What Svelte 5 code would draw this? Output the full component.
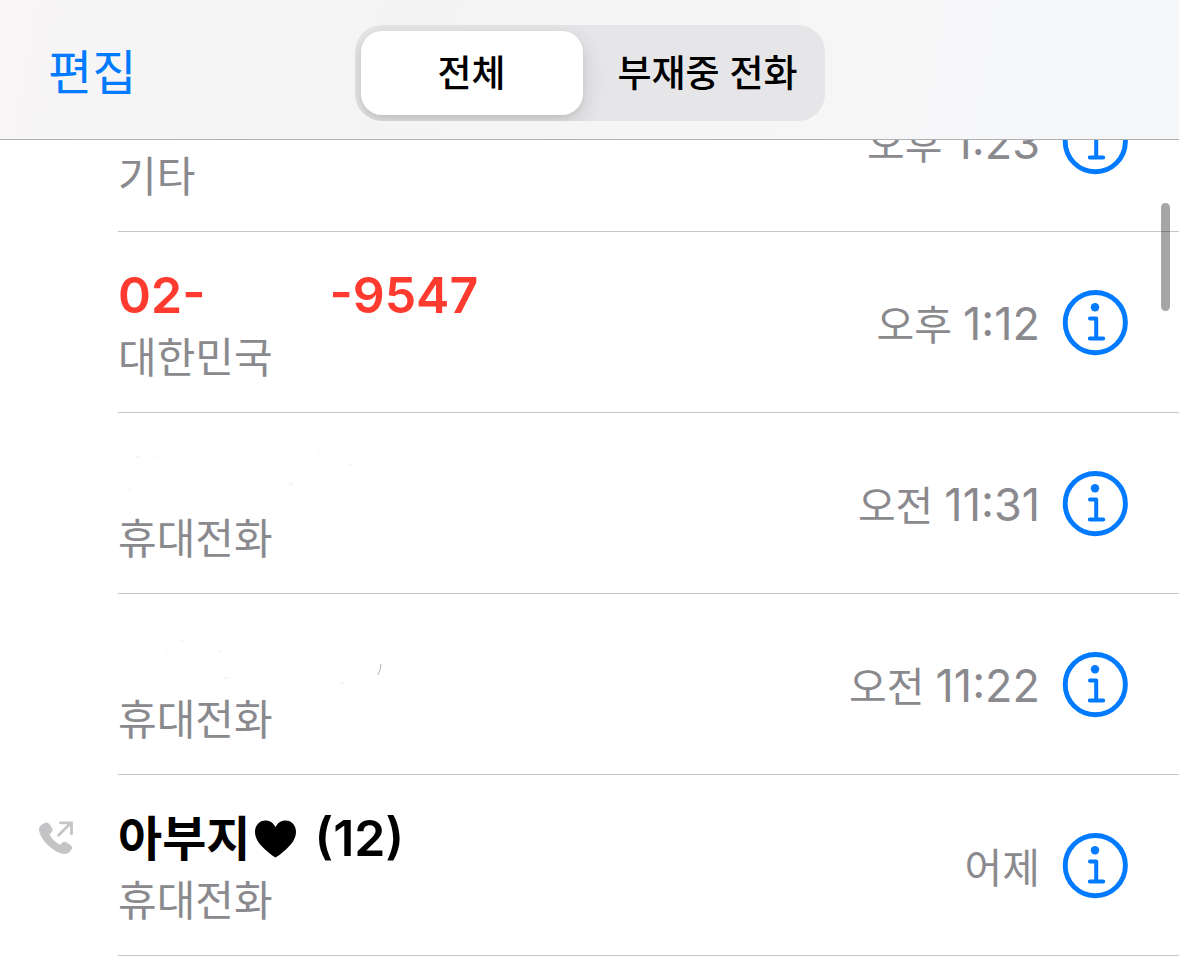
<script>
  const calls = [
    { kind: 'other', label: '기타', day: '오후', clock: '1:23' },
    { kind: 'masked', label: '대한민국', day: '오후', clock: '1:12' },
    { kind: 'blank', label: '휴대전화', day: '오전', clock: '11:31', marks: 'M18 8h5M36 8l2-1M199 4h2M231 16h3M9 43l4-3M171 36l4-2M156 47h3' },
    { kind: 'blank', label: '휴대전화', day: '오전', clock: '11:22', marks: 'M62 11h3M47 21h2M100 21h3M106 48h4M222 53h4', nick: 'M263 34q0 5-3 11' },
    { kind: 'contact', label: '휴대전화', day: '어제', clock: '', outgoing: true },
  ];
  let filter = $state('all');
</script>

<div class="screen">
  <header>
    <button class="edit" type="button">편집</button>
    <div class="segments" role="group" aria-label="통화 목록">
      <button type="button" class:active={filter === 'all'} aria-pressed={filter === 'all'} onclick={() => (filter = 'all')}>전체</button>
      <button type="button" class:active={filter === 'missed'} aria-pressed={filter === 'missed'} onclick={() => (filter = 'missed')}>부재중 전화</button>
    </div>
  </header>

  <main>
    <ul>
      {#each calls as call}
        <li>
          <div class="status">
            {#if call.outgoing}
              <svg width="36" height="36" viewBox="0 0 36 36" aria-hidden="true">
                <path d="M5.2 2.2C7.2.8 9 1.4 10.3 3.1l2.6 3.7c1.2 1.8.9 3.1-.6 4.7l-1 1.1c-.6.7-.5 1.3 0 2.2 1.8 3 4.8 6.2 8.4 8.4.8.5 1.5.6 2.2-.1l1.2-1.1c1.5-1.4 2.9-1.6 4.6-.5l3.7 2.5c1.8 1.2 2.3 3 1 4.8-1.4 2.2-3.4 4.1-6.6 4.1-5.7 0-12.3-4-17.2-9.1C3.6 18.7 0 12.4 0 8.2 0 5.7 1.8 3.9 5.2 2.2z" fill="#c4c4c6" />
                <path d="M19.5 14.2L31.7 2.2M21.5 1.8h11v11" fill="none" stroke="#c4c4c6" stroke-width="2.8" stroke-linecap="round" stroke-linejoin="miter" />
              </svg>
            {/if}
          </div>
          <div class="body">
            <div class="who">
              <div class="name" class:missed={call.kind === 'masked'}>
                {#if call.kind === 'masked'}
                  <span>02-</span><span class="mask"></span><span>-9547</span>
                {:else if call.kind === 'contact'}
                  <span class="person">아부지</span>
                  <svg class="heart" width="41" height="38" viewBox="0 0 42 38" role="img" aria-label="하트">
                    <path d="M21 38C19 37 14 33.500 9 28.500 3.500 23 0 18 0 11.500 0 5 4.500 0 10.500 0 15.500 0 19 2.500 21 7 23 2.500 26.500 0 31.500 0 37.500 0 42 5 42 11.500 42 18 38.500 23 33 28.500 28 33.500 23 37 21 38z" />
                  </svg>
                  <span>(12)</span>
                {:else if call.marks}
                  <svg width="300" height="56" viewBox="0 0 300 56" fill="none" aria-hidden="true">
                    <path d={call.marks} stroke="#ededee" />
                    {#if call.nick}<path d={call.nick} stroke="#b5b5b5" />{/if}
                  </svg>
                {/if}
              </div>
              <div class="label">{call.label}</div>
            </div>
            <time><span class="day">{call.day}</span>{#if call.clock}<span>{call.clock}</span>{/if}</time>
            <button class="info" type="button" aria-label="정보">
              <svg width="66" height="66" viewBox="0 0 66 66" fill="none" aria-hidden="true">
                <circle cx="33.3" cy="32.6" r="30.1" stroke="#007aff" stroke-width="4.900" />
                <circle cx="33" cy="17.200" r="4.200" fill="#007aff" />
                <path d="M28 28.600h6.200v20M27.800 48.600h13.400" stroke="#007aff" stroke-width="4" stroke-linecap="round" stroke-linejoin="round" />
              </svg>
            </button>
          </div>
        </li>
      {/each}
    </ul>
    <div class="scrollbar"></div>
  </main>
</div>

<style>
  :global(body) {
    margin: 0;
    background: #fff;
  }
  .screen {
    font-family: Inter, 'Noto Sans CJK KR', sans-serif;
    color: #000;
  }
  button {
    border: 0;
    padding: 0;
    background: none;
    font: inherit;
    color: inherit;
    cursor: pointer;
  }
  header {
    display: grid;
    grid-template-columns: 1fr auto 1fr;
    align-items: center;
    padding: 25px 48px 18px;
    border-bottom: 1px solid #b0b0b2;
    background: linear-gradient(100deg, #f7f5f6, #f5f4f5 35%, #f6f6f7 70%, #f5f7f9);
  }
  .edit {
    justify-self: start;
    font-size: 48px;
    line-height: 60px;
    color: #007aff;
  }
  .segments {
    display: grid;
    grid-template-columns: 222px 222px;
    gap: 14px;
    padding: 6px;
    border-radius: 27px;
    background: #e6e6e8;
    overflow: hidden;
  }
  .segments button {
    padding-top: 2px;
    border-radius: 21px;
    font-size: 37px;
    line-height: 82px;
    font-weight: 500;
    white-space: nowrap;
  }
  .segments .active {
    background: #fff;
    box-shadow: 0 8px 22px rgba(0, 0, 0, 0.15), 0 2px 4px rgba(0, 0, 0, 0.05);
  }
  main {
    position: relative;
    overflow: hidden;
  }
  ul {
    list-style: none;
    margin: -89px 0 0;
    padding: 0;
  }
  li {
    display: flex;
  }
  .status {
    width: 118px;
    padding: 46px 0 0 39px;
    box-sizing: border-box;
    flex: none;
  }
  .body {
    flex: 1;
    display: flex;
    align-items: center;
    padding: 1px 51px 0 0;
    border-bottom: 1px solid #c6c6c8;
  }
  .who {
    flex: 1;
    padding: 32px 0 23px;
  }
  .name {
    display: flex;
    align-items: center;
    height: 61px;
    font-size: 50px;
    line-height: 61px;
    font-weight: 600;
    white-space: nowrap;
  }
  .missed {
    color: #ff3b30;
  }
  .mask {
    width: 124px;
  }
  .person {
    font-size: 48px;
  }
  .heart {
    margin: 0 18px 0 5px;
  }
  .label {
    font-size: 42px;
    line-height: 63px;
    color: #8a8a8e;
  }
  time {
    display: flex;
    align-items: baseline;
    gap: 11px;
    padding-top: 4px;
    font-size: 45px;
    line-height: 60px;
    color: #8a8a8e;
    white-space: nowrap;
  }
  .day {
    font-size: 41px;
  }
  .info {
    display: flex;
    margin-left: 22px;
  }
  .scrollbar {
    position: absolute;
    top: 63px;
    right: 9px;
    width: 9px;
    height: 108px;
    border-radius: 5px;
    background: rgba(0, 0, 0, 0.35);
  }
</style>
